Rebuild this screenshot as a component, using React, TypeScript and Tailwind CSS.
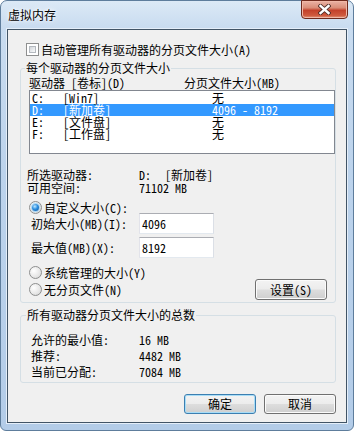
import React from 'react';

const CheckBox = () => (
  <span className="w-[13px] h-[13px] shrink-0 border border-[#8e8f8f] bg-white p-[2px] flex">
    <span className="flex-1 border border-[#b4b9bf] bg-[linear-gradient(135deg,#d2d5d9_0%,#eef0f2_70%,#fafafa_100%)]" />
  </span>
);

const Radio = ({ checked }: { checked?: boolean }) => (
  <span className="w-[13px] h-[13px] shrink-0 rounded-full border border-[#8e8f8f] bg-[radial-gradient(circle_at_35%_35%,#ffffff_0%,#e6e6e6_60%,#cfcfcf_100%)] flex items-center justify-center">
    {checked && (
      <span className="w-[7px] h-[7px] rounded-full bg-[radial-gradient(circle_at_40%_35%,#bfe8ff_0%,#2c8fe0_45%,#0b4f9c_100%)] shadow-[0_0_1px_1px_#9fd3f5]" />
    )}
  </span>
);

const Btn = ({ children, def, className = '' }: { children: React.ReactNode; def?: boolean; className?: string }) => (
  <button
    className={`w-[72px] shrink-0 rounded-[3px] border leading-[12px] text-black bg-[linear-gradient(#f3f3f3_0%,#ececec_48%,#dddddd_52%,#cfcfcf_100%)] ${
      def
        ? 'border-[#3c7fb1] shadow-[inset_0_0_0_1px_#a8ddf7]'
        : 'border-[#707070] shadow-[inset_0_0_0_1px_#fbfbfb]'
    } ${className}`}
  >
    {children}
  </button>
);

const Input = ({ value }: { value: string }) => (
  <div className="w-[75px] h-[21px] border border-[#abadb3] border-l-[#e2e3ea] border-r-[#dbdfe6] border-b-[#e3e9ef] bg-white pl-[2px] flex items-center leading-[12px]">
    {value}
  </div>
);

const drives = [
  { l: 'C:', n: '[Win7]', s: '无' },
  { l: 'D:', n: '[新加卷]', s: '4096 - 8192', sel: true },
  { l: 'E:', n: '[文件盘]', s: '无' },
  { l: 'F:', n: '[工作盘]', s: '无' },
];

export default function App() {
  return (
    <div className="w-[354px] h-[431px] overflow-hidden bg-white text-[12px] text-black [font-family:'Noto_Sans_Mono_CJK_SC','Noto_Sans_CJK_SC',sans-serif]">
      <div className="w-[354px] h-[431px] rounded-t-[7px] rounded-b-[6px] border border-[#5e7d9c] bg-[linear-gradient(180deg,#dce9f6_0%,#c9dcf0_6%,#bcd3ec_40%,#b3cce8_100%)] flex flex-col">
        {/* title bar */}
        <div className="h-[28px] flex justify-between">
          <div className="pl-[7px] pt-[8px] leading-[12px] [text-shadow:0_0_6px_#ffffff,0_0_3px_#ffffff]">虚拟内存</div>
          <div className="-mt-[1px] mr-[5px] w-[47px] h-[19px] rounded-b-[4px] border border-[#6e2a1d] bg-[linear-gradient(#eab3a5_0%,#d98d78_40%,#c3412a_55%,#cf5a3e_85%,#e29a7e_100%)] shadow-[inset_0_0_0_1px_#f0b7a6] flex items-center justify-center">
            <svg width="13" height="11" viewBox="0 0 13 11">
              <path d="M2.5 2 L10.5 9 M10.5 2 L2.5 9" stroke="#4a2a24" strokeWidth="4.2" strokeLinecap="square" />
              <path d="M2.5 2 L10.5 9 M10.5 2 L2.5 9" stroke="#ffffff" strokeWidth="2.4" strokeLinecap="square" />
            </svg>
          </div>
        </div>

        {/* client area */}
        <div className="ml-[6px] w-[340px] h-[394px] border border-[#415466] bg-[#f0f0f0] shadow-[0_0_0_1px_#e4eef9] flex flex-col">
          <div className="mt-[13px] ml-[18px] h-[13px] flex items-center gap-[2px] leading-[12px]">
            <CheckBox />
            <span>自动管理所有驱动器的分页文件大小(A)</span>
          </div>

          <fieldset className="mt-[6px] ml-[12px] w-[316px] h-[241px] border border-[#d5dfe5] rounded-[3px] p-0 m-0">
            <legend className="ml-[4px] px-[1px] leading-[12px]">每个驱动器的分页文件大小</legend>
            <div className="pl-[6px] flex flex-col">
              <div className="ml-[2px] mt-[3px] flex leading-[12px]">
                <span className="w-[155px]">驱动器 [卷标](D)</span>
                <span>分页文件大小(MB)</span>
              </div>
              <div className="ml-[2px] mt-[1px] w-[306px] h-[64px] border border-[#828790] bg-white pt-[1px]">
                {drives.map((d) => (
                  <div
                    key={d.l}
                    className={`h-[12px] leading-[12px] pl-[2px] flex ${d.sel ? 'bg-[#3399ff] text-white' : ''}`}
                  >
                    <span className="w-[31px]">{d.l}</span>
                    <span className="w-[149px]">{d.n}</span>
                    <span>{d.s}</span>
                  </div>
                ))}
              </div>

              <div className="mt-[14px] flex leading-[13px]">
                <span className="w-[112px]">所选驱动器:</span>
                <span className="w-[26px]">D:</span>
                <span>[新加卷]</span>
              </div>
              <div className="flex leading-[13px]">
                <span className="w-[112px]">可用空间:</span>
                <span>71102 MB</span>
              </div>

              <div className="mt-[7px] ml-[2px] h-[13px] flex items-center gap-[2px] leading-[12px]">
                <Radio checked />
                <span>自定义大小(C):</span>
              </div>
              <div className="-mt-[1px] flex items-center">
                <span className="ml-[4px] w-[108px] leading-[12px]">初始大小(MB)(I):</span>
                <Input value="4096" />
              </div>
              <div className="mt-[3px] flex items-center">
                <span className="ml-[4px] w-[108px] leading-[12px]">最大值(MB)(X):</span>
                <Input value="8192" />
              </div>

              <div className="mt-[8px] ml-[2px] h-[13px] flex items-center gap-[2px] leading-[12px]">
                <Radio />
                <span>系统管理的大小(Y)</span>
              </div>
              <div className="h-[21px] flex items-center justify-between">
                <div className="ml-[2px] flex items-center gap-[2px] leading-[12px]">
                  <Radio />
                  <span>无分页文件(N)</span>
                </div>
                <Btn className="h-[21px] mr-[8px]">设置(S)</Btn>
              </div>
            </div>
          </fieldset>

          <fieldset className="mt-[6px] ml-[12px] w-[316px] h-[74px] border border-[#d5dfe5] rounded-[3px] p-0 m-0">
            <legend className="ml-[5px] px-[1px] leading-[12px]">所有驱动器分页文件大小的总数</legend>
            <div className="pl-[10px] mt-[11px] flex flex-col leading-[16px]">
              <div className="flex">
                <span className="w-[108px]">允许的最小值:</span>
                <span>16 MB</span>
              </div>
              <div className="flex">
                <span className="w-[108px]">推荐:</span>
                <span>4482 MB</span>
              </div>
              <div className="flex">
                <span className="w-[108px]">当前已分配:</span>
                <span>7084 MB</span>
              </div>
            </div>
          </fieldset>

          <div className="mt-[11px] mr-[10px] flex justify-end gap-[8px]">
            <Btn def className="h-[20px]">确定</Btn>
            <Btn className="h-[20px]">取消</Btn>
          </div>
        </div>
      </div>
    </div>
  );
}
